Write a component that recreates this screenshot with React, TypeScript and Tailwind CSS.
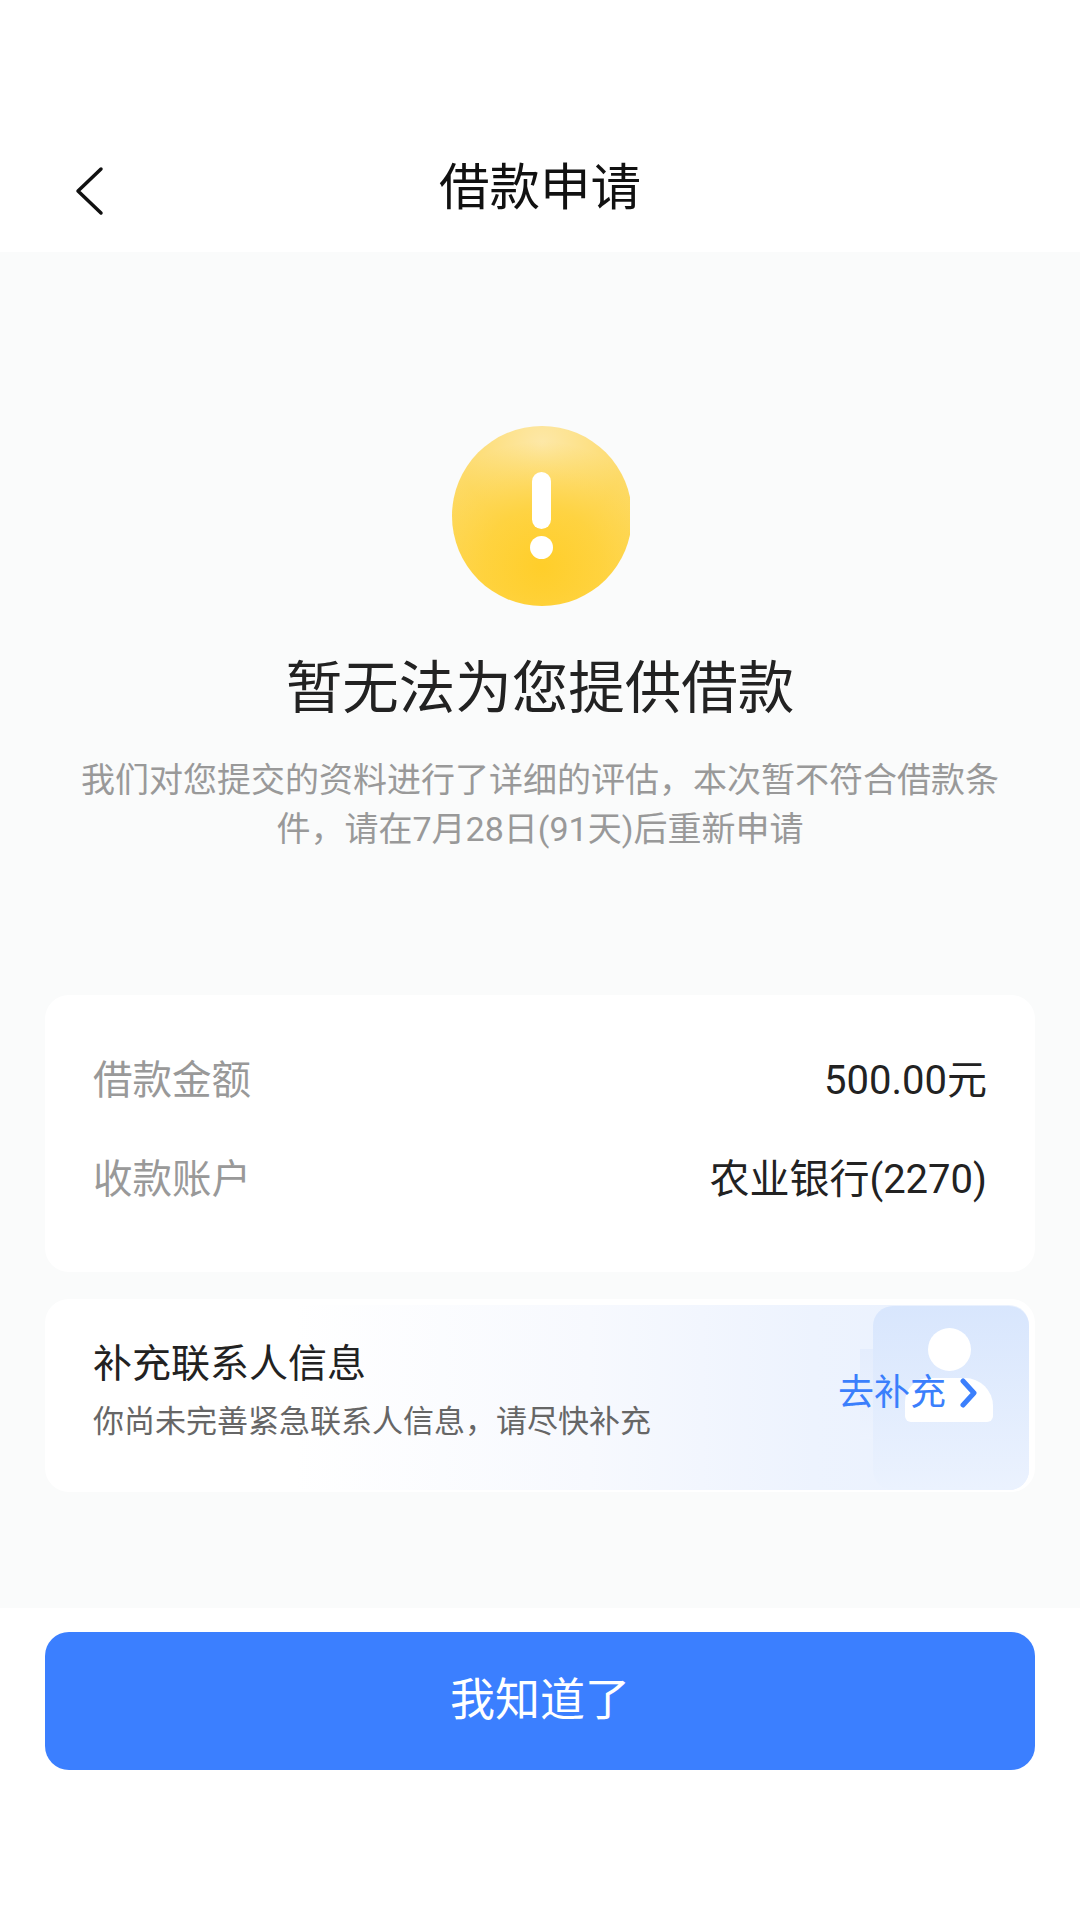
export default function App() {
  return (
    <div className="w-[1080px] h-[1920px] flex flex-col bg-white font-['Roboto','Noto_Sans_CJK_SC',sans-serif] overflow-hidden">
      <header className="h-[252px] shrink-0 pt-[152px] relative bg-white">
        <svg className="absolute left-[74px] top-[166px]" width="30" height="50" viewBox="0 0 30 50" fill="none">
          <path d="M27 3 L4 25 L27 47" stroke="#111" strokeWidth="3.5" strokeLinecap="round" strokeLinejoin="round" />
        </svg>
        <h1 className="text-center text-[50.5px] leading-[72px] text-[#111]">借款申请</h1>
      </header>
      <main className="h-[1356px] shrink-0 bg-[#fafbfb] px-[45px] flex flex-col">
        <div className="mt-[174px] ml-[407px] w-[178px] h-[180px] relative overflow-hidden">
          <div className="w-[180px] h-[180px] rounded-full bg-[radial-gradient(circle_at_50%_78%,#ffce2a_0%,rgba(255,208,50,0.75)_35%,rgba(255,214,80,0)_75%),radial-gradient(circle_at_50%_10%,#fde8a8_0%,#fddb6c_45%,#fed95e_80%,#fee07c_100%)]" />
          <div className="absolute left-[80px] top-[46px] w-[19px] h-[57px] rounded-full bg-white" />
          <div className="absolute left-[78px] top-[110px] w-[23px] h-[23px] rounded-full bg-white" />
        </div>
        <h2 className="mt-[47px] text-center text-[56.5px] leading-[72px] text-[#222]">暂无法为您提供借款</h2>
        <p className="mt-[31px] px-[35px] text-center text-[34px] leading-[49px] text-[#999]">
          我们对您提交的资料进行了详细的评估，本次暂不符合借款条件，请在7月28日(91天)后重新申请
        </p>
        <section className="mt-[141px] h-[277px] rounded-[24px] bg-white px-[48px] pt-[57px] flex flex-col gap-[41px] text-[40px] leading-[58px]">
          <div className="flex justify-between">
            <span className="text-[39.5px] text-[#999]">借款金额</span>
            <span className="text-[#222]">500.00元</span>
          </div>
          <div className="flex justify-between">
            <span className="text-[39.5px] text-[#999]">收款账户</span>
            <span className="text-[#222]">农业银行(2270)</span>
          </div>
        </section>
        <section className="mt-[27px] h-[193px] rounded-[24px] bg-white relative overflow-hidden">
          <div className="absolute left-[6px] right-[6px] top-[6px] bottom-[2px] rounded-[20px] bg-[linear-gradient(90deg,#ffffff_25%,#f7f9fe_55%,#edf3fe_78%,#e9f1fe_100%)]" />
          <div className="absolute left-[815px] top-[50px] w-[20px] h-[90px] bg-[linear-gradient(180deg,#e4edfd,#edf3fe)]" />
          <div className="absolute right-[6px] top-[7px] bottom-[2px] w-[156px] rounded-[20px] bg-[linear-gradient(180deg,#d8e6fd,#ebf2fe)]" />
          <div className="absolute left-[883px] top-[29px] w-[43px] h-[43px] rounded-full bg-white" />
          <div className="absolute left-[860px] top-[79px] w-[88px] h-[44px] rounded-tl-[24px] rounded-tr-[28px] rounded-b-[6px] bg-white" />
          <div className="relative pl-[48px] pt-[36px] flex items-start justify-between pr-[57px]">
            <div className="flex flex-col gap-[6px]">
              <div className="text-[39px] leading-[58px] text-[#222]">补充联系人信息</div>
              <div className="text-[31px] leading-[46px] text-[#666]">你尚未完善紧急联系人信息，请尽快补充</div>
            </div>
            <div className="flex items-center gap-[14px] text-[36px] leading-[52px] text-[#3b7ffc] mt-[32px]">
              去补充
              <svg width="18" height="30" viewBox="0 0 18 30" fill="none">
                <path d="M3 3 L14 15 L3 27" stroke="#3b7ffc" strokeWidth="5" strokeLinecap="round" strokeLinejoin="round" />
              </svg>
            </div>
          </div>
        </section>
      </main>
      <div className="px-[45px] pt-[24px] bg-white">
        <button className="w-full h-[138px] rounded-[24px] bg-[#3b7fff] text-white text-[45px]">我知道了</button>
      </div>
    </div>
  );
}
